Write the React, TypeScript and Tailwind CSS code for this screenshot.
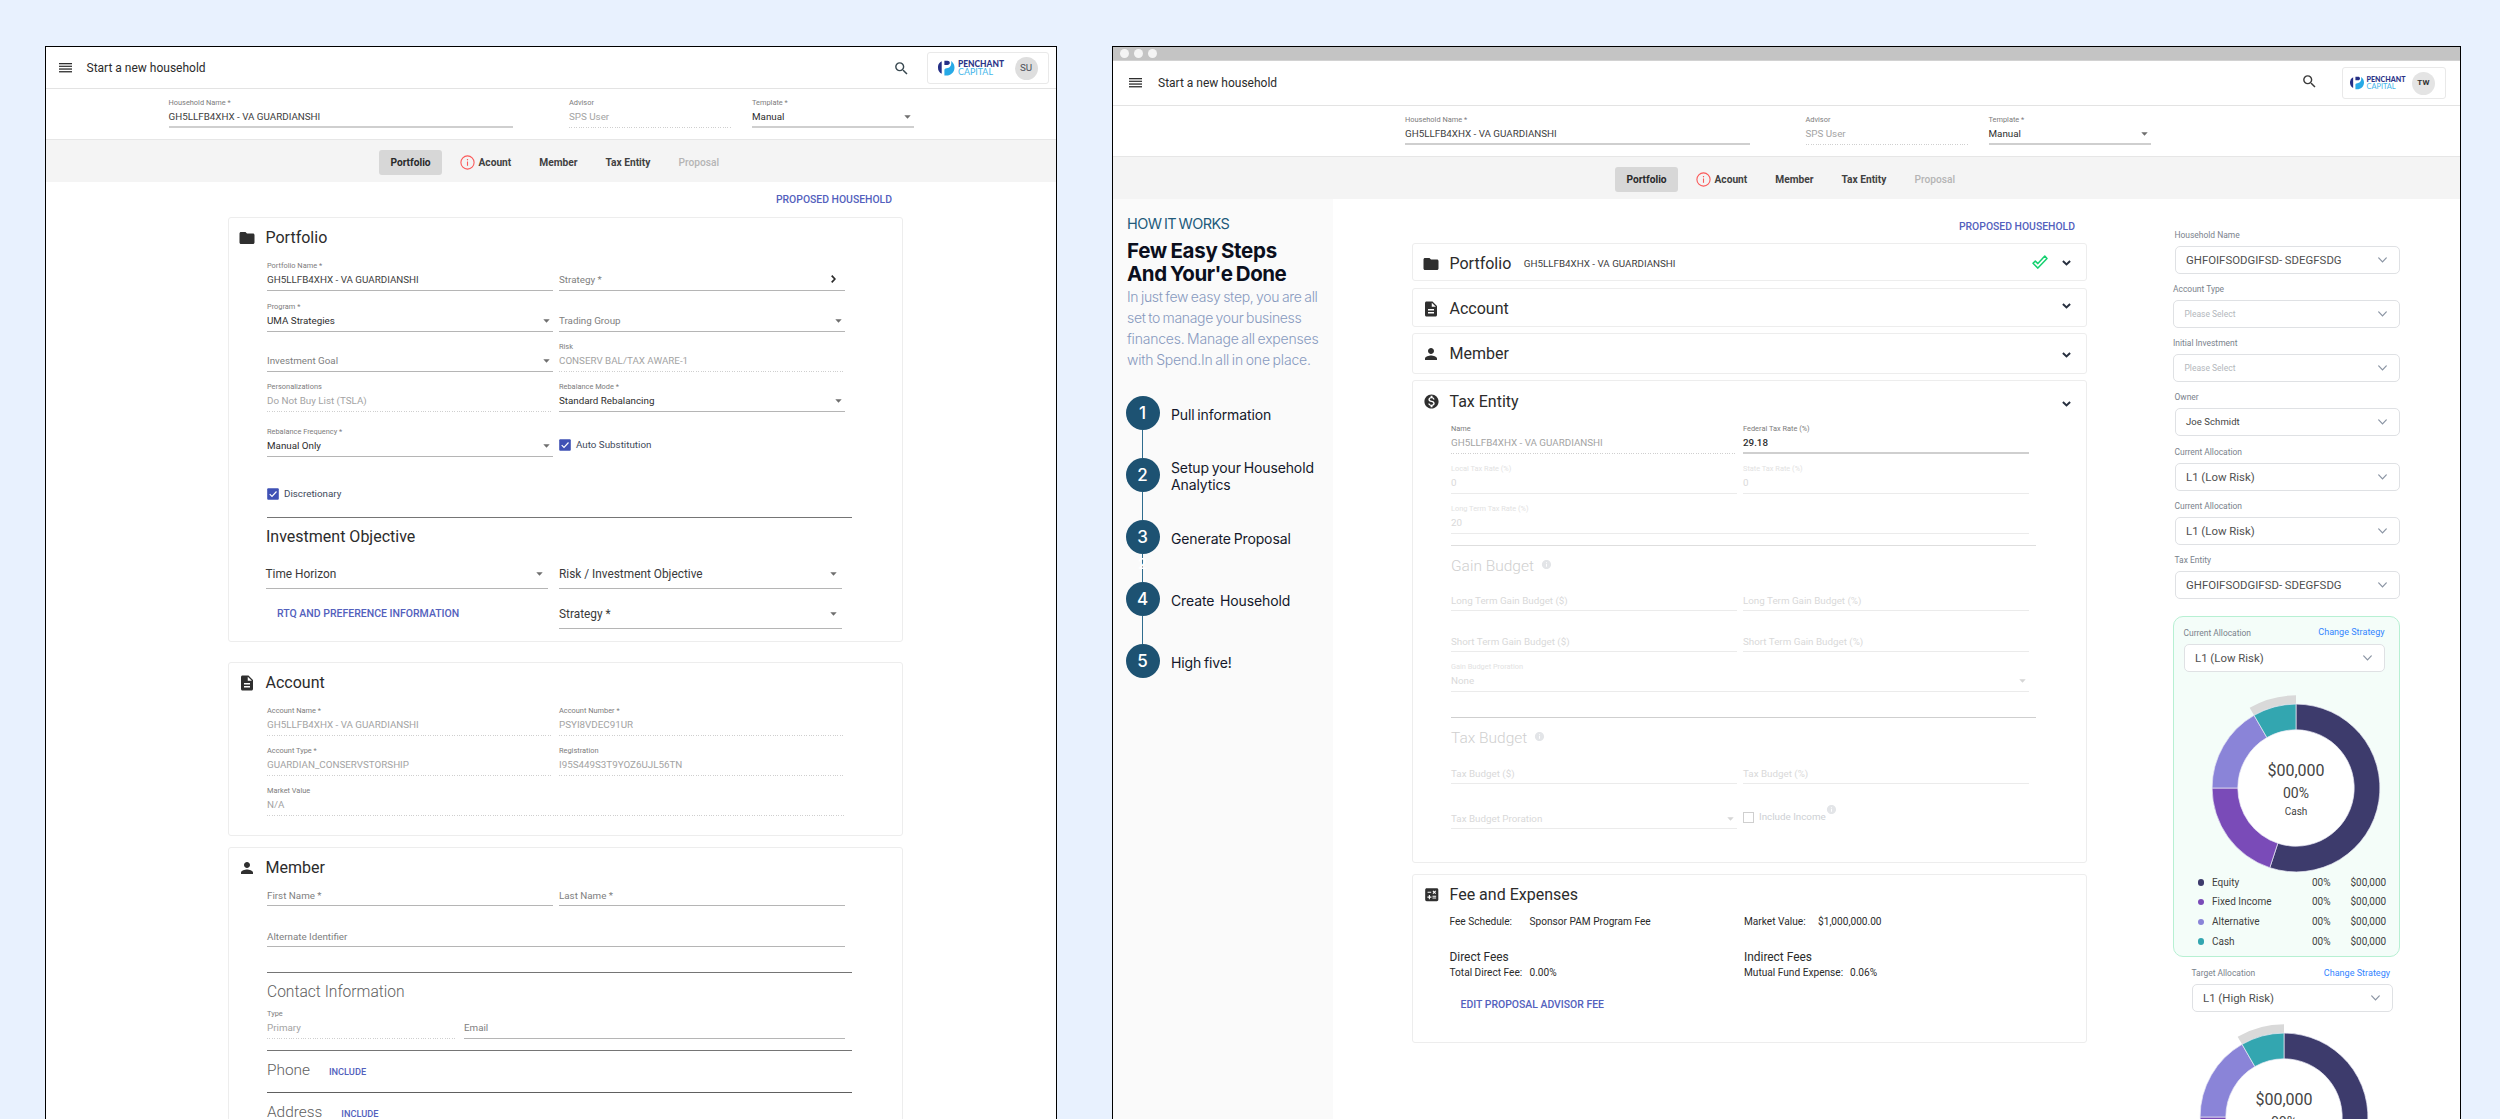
import React from "react";
import { clsx } from "clsx";
import {
  MdCalculate,
  MdDescription,
  MdFolder,
  MdInfo,
  MdMonetizationOn,
  MdPerson,
  MdSearch,
} from "react-icons/md";

/* ---------- small drawings ---------- */

const MenuIcon = () => (
  <svg width="13" height="10" viewBox="0 0 13 10" className="text-[#2e2e2e]" fill="currentColor">
    <rect y="0" width="13" height="1.3" />
    <rect y="2.7" width="13" height="1.2" />
    <rect y="5.4" width="13" height="1.3" />
    <rect y="8.1" width="13" height="1.3" />
  </svg>
);

const Caret = ({ className }: { className?: string }) => (
  <svg width="7" height="4" viewBox="0 0 7 4" className={clsx("shrink-0", className ?? "text-[#6f6f6f]")} fill="currentColor">
    <path d="M0.3 0.2h6.4L3.5 3.8z" />
  </svg>
);

const BoldChevron = ({ className }: { className?: string }) => (
  <svg width="9" height="6" viewBox="0 0 9 6" className={clsx("shrink-0 text-[#27303f]", className)} fill="none" stroke="currentColor" strokeWidth="2">
    <path d="M0.9 1l3.6 3.4L8.1 1" />
  </svg>
);

const ThinChevron = () => (
  <svg width="9" height="6" viewBox="0 0 9 6" className="shrink-0 text-[#8a94a3]" fill="none" stroke="currentColor" strokeWidth="1.2" strokeLinecap="round">
    <path d="M0.7 0.9l3.8 3.9 3.8-3.9" />
  </svg>
);

const RightChevron = () => (
  <svg width="5" height="8" viewBox="0 0 5 8" className="mb-[2px] mr-[9px] text-[#2b2b2b]" fill="none" stroke="currentColor" strokeWidth="1.7">
    <path d="M0.7 0.6l3.2 3.4L0.7 7.4" />
  </svg>
);

const GreenCheck = ({ className }: { className?: string }) => (
  <svg width="16" height="14" viewBox="0 0 16 14" className={className} fill="none" stroke="#15d170" strokeWidth="1.5" strokeLinejoin="round">
    <path d="M1 8.3L3.3 6.1L5.9 8.6L12.8 1L15 3.4L5.9 13.1Z" />
  </svg>
);

const AlertIcon = () => (
  <svg width="15" height="15" viewBox="0 0 15 15" fill="none" stroke="#fb5a5a">
    <circle cx="7.5" cy="7.5" r="6.6" strokeWidth="1.1" />
    <path d="M7.5 6.5v4.3" strokeWidth="1.1" />
    <path d="M7.5 4v1.3" strokeWidth="1.2" />
  </svg>
);

const LogoMark = ({ small }: { small?: boolean }) => (
  <svg viewBox="0 0 49 46" className={clsx("shrink-0", small ? "h-[13.5px] w-[14px]" : "h-[15.5px] w-[16.5px]")}>
    <path d="M11 4Q-1 10 0 23Q0 35 11 41Z" fill="#252f86" />
    <path d="M19 2h9c4 0 7 2 7 6s-3 6.5-7 6.5h-9z" fill="#252f86" />
    <path d="M39 3C46 8 49 15 49 22C49 36 38 46 25 46H19V29C20 25 24 25 29 24C37 22 41 14 39 3Z" fill="#27a9e6" />
  </svg>
);

const CheckedBox = () => (
  <svg width="12" height="12" viewBox="0 0 12 12" className="shrink-0">
    <rect width="11.6" height="11.6" x="0.2" y="0.2" rx="1" fill="#3f51b5" />
    <path d="M2.7 6.2l2.3 2.3 4.5-5" fill="none" stroke="#fff" strokeWidth="1.15" />
  </svg>
);

/* ---------- header ---------- */

function Brand({ initials, small }: { initials: string; small?: boolean }) {
  return (
    <div className={clsx("flex h-8 items-center rounded-[3px] border border-[#e9e9e9]", small ? "w-[104px] pl-[7px]" : "w-[122px] pl-[10px]")}>
      <LogoMark small={small} />
      <div
        className={clsx(
          "flex flex-col font-[Lato]",
          small ? "ml-[2.5px] w-[39.5px] gap-[0.5px] text-[7.1px] leading-[7px]" : "ml-[3.5px] w-[47px] gap-[0.5px] text-[8.4px] leading-[8px]"
        )}
      >
        <span className="font-black text-[#2b3488]">PENCHANT</span>
        <span className={clsx("text-[#45b6ea]", small ? "text-[7.4px]" : "text-[8.9px]")}>CAPITAL</span>
      </div>
      <div
        className={clsx(
          "flex h-[23px] w-[23px] shrink-0 items-center justify-center rounded-full",
          small ? "ml-[6px] bg-[#e4e4e4] text-[8px] font-bold tracking-[0.3px] text-[#333]" : "ml-[9.5px] bg-[#dedede] text-[9.8px] text-[#4b5058]"
        )}
      >
        {initials}
      </div>
    </div>
  );
}

function HouseholdBar({ indent }: { indent: string }) {
  return (
    <div className={clsx("flex h-[51px] shrink-0 border-b border-[#e6e6e6] pt-2", indent)}>
      <Field className="w-[344.5px]" label="Household Name *" value="GH5LLFB4XHX - VA GUARDIANSHI" line="heavy" />
      <Field className="ml-[56px] w-[162px]" label="Advisor" value="SPS User" tone="muted" line="dots" />
      <Field className="ml-[21px] w-[162px]" label="Template *" value="Manual" line="heavy" tone="strong" caret />
    </div>
  );
}

function Tabs({ indent }: { indent: string }) {
  return (
    <div className={clsx("flex h-[42px] shrink-0 items-start bg-[#f4f4f4] pt-[10px] text-[10.2px] font-bold text-[#414141]", indent)}>
      <div className="flex h-[25px] w-[63px] items-center justify-center rounded-[3px] bg-[#d7d7d7] text-[#2a2a2a]">Portfolio</div>
      <div className="ml-[17.5px] flex h-[25px] items-center">
        <AlertIcon />
        <span className="ml-[4px]">Acount</span>
        <span className="ml-[28px]">Member</span>
        <span className="ml-[28px]">Tax Entity</span>
        <span className="ml-[28px] font-medium text-[#b4b4b4]">Proposal</span>
      </div>
    </div>
  );
}

/* ---------- form pieces ---------- */

type Tone = "normal" | "strong" | "muted" | "hint" | "faded";
type Line = "solid" | "heavy" | "dots" | "faded";

const toneClass: Record<Tone, string> = {
  normal: "text-[#3d3d3d]",
  strong: "text-[#2e2e2e]",
  muted: "text-[#a3a3a3]",
  hint: "text-[#808080]",
  faded: "text-[#d9d9d9]",
};

function Underline({ line }: { line: Line }) {
  if (line === "dots")
    return (
      <div className="h-px w-full bg-[repeating-linear-gradient(90deg,#cfcfcf_0_1px,transparent_1px_2.4px)]" />
    );
  if (line === "heavy") return <div className="-mt-px h-[2px] w-full shrink-0 bg-[#cfcfcf]" />;
  if (line === "faded") return <div className="h-px w-full bg-[#ebebeb]" />;
  return <div className="h-px w-full bg-[#b5b5b5]" />;
}

interface FieldProps {
  label?: string;
  value: string;
  tone?: Tone;
  line?: Line;
  caret?: boolean;
  chevron?: boolean;
  bare?: boolean;
  bold?: boolean;
  labelClass?: string;
  className?: string;
}

/* A material style text field. `bare` drops the floating label. */
function Field({ label, value, tone = "normal", line = "solid", caret, chevron, bare, bold, labelClass, className }: FieldProps) {
  return (
    <div className={clsx("flex flex-col whitespace-nowrap", bare ? "h-[18px]" : "h-[31px]", className)}>
      {!bare && (
        <div className={clsx("h-3 text-[7.4px] leading-3", labelClass ?? "text-[#7c7c7c]")}>{label}</div>
      )}
      <div className={clsx("flex h-4 items-center justify-between text-[9.8px] leading-4", toneClass[tone], bold && "font-medium")}>
        <span>{value}</span>
        {caret && <Caret className={clsx("mr-[3px]", line === "faded" ? "text-[#d5d5d5]" : "text-[#6f6f6f]")} />}
        {chevron && <RightChevron />}
      </div>
      <div className={bare ? "h-px" : "h-[2px]"} />
      <Underline line={line} />
    </div>
  );
}

/* Taller select row that the objective block uses. */
function BigSelect({ value, className }: { value: string; className?: string }) {
  return (
    <div className={clsx("flex h-[23px] flex-col", className)}>
      <div className="flex h-4 items-center justify-between text-[11.85px] leading-4 text-[#3a3a3a]">
        <span>{value}</span>
        <Caret className="mr-[5px] text-[#6f6f6f]" />
      </div>
      <div className="mt-[6px] h-px bg-[#b5b5b5]" />
    </div>
  );
}

const Row = ({ className, children }: { className?: string; children: React.ReactNode }) => (
  <div className={clsx("flex gap-[6.5px]", className)}>{children}</div>
);

const Rule = ({ className }: { className: string }) => <div className={clsx("h-px w-[585px]", className)} />;

function CardTitle({ icon, title, className, children }: { icon: React.ReactNode; title: string; className?: string; children?: React.ReactNode }) {
  return (
    <div className={clsx("flex items-center", className ?? "h-10")}>
      <div className="flex w-[36.5px] justify-center text-[#2f2f2f]">{icon}</div>
      <h2 className="text-[16px] leading-5 text-[#2c2c2c]">{title}</h2>
      {children}
    </div>
  );
}

const Card = ({ className, children }: { className: string; children: React.ReactNode }) => (
  <section className={clsx("w-[675px] shrink-0 rounded-[3px] border border-[#ededed] bg-white", className)}>{children}</section>
);

const half = "w-[285.5px]";
const full = "w-[577.5px]";
const link = "font-medium text-[#5361bd]";

/* ---------- left window ---------- */

function LegacyWindow() {
  return (
    <div className="flex h-[1200px] w-[1012px] shrink-0 flex-col border border-black bg-white">
      <header className="flex h-[42px] shrink-0 items-center border-b border-[#e3e3e3] pl-[13px] pr-[7px] pt-px">
        <MenuIcon />
        <h1 className="ml-[14.5px] flex-1 text-[12px] leading-4 text-[#2b2b2b]">Start a new household</h1>
        <MdSearch size={17} className="mr-[17px] text-[#37474f]" />
        <Brand initials="SU" />
      </header>
      <HouseholdBar indent="pl-[122.5px]" />
      <Tabs indent="pl-[333px]" />

      <div className="flex w-[857px] shrink-0 flex-col pl-[182px]">
        <div className={clsx("w-[664px] pt-2 text-right text-[10.4px] leading-5", link)}>PROPOSED HOUSEHOLD</div>

        <Card className="mt-[7px] h-[425px]">
          <CardTitle icon={<MdFolder size={18} />} title="Portfolio" />
          <div className="flex flex-col pl-[38px]">
            <Row className="mt-[2px]">
              <Field className={half} label="Portfolio Name *" value="GH5LLFB4XHX - VA GUARDIANSHI" />
              <Field className={half} value="Strategy *" tone="hint" chevron />
            </Row>
            <Row className="mt-[10px]">
              <Field className={half} label="Program *" value="UMA Strategies" tone="strong" caret />
              <Field className={half} value="Trading Group" tone="hint" caret />
            </Row>
            <Row className="mt-[9px]">
              <Field className={half} value="Investment Goal" tone="hint" caret />
              <Field className={half} label="Risk" value="CONSERV BAL/TAX AWARE-1" tone="muted" line="dots" />
            </Row>
            <Row className="mt-[9px]">
              <Field className={half} label="Personalizations" value="Do Not Buy List (TSLA)" tone="muted" line="dots" />
              <Field className={half} label="Rebalance Mode *" value="Standard Rebalancing" tone="strong" caret />
            </Row>
            <Row className="mt-[14px]">
              <Field className={half} label="Rebalance Frequency *" value="Manual Only" tone="strong" caret />
              <div className="mt-[13px] flex h-3 items-center text-[9.8px] leading-3 text-[#414a5c]">
                <CheckedBox />
                <span className="ml-[5px]">Auto Substitution</span>
              </div>
            </Row>
            <div className="mt-[31px] flex h-3 items-center text-[9.8px] leading-3 text-[#414a5c]">
              <CheckedBox />
              <span className="ml-[5px]">Discretionary</span>
            </div>
            <Rule className="mt-[17px] bg-[#757575]" />
            <h3 className="-ml-px mt-[9px] text-[16px] leading-5 text-[#2c2c2c]">Investment Objective</h3>
            <div className="-ml-[1.5px] mt-[19px] flex gap-[11px]">
              <BigSelect className="w-[282.5px]" value="Time Horizon" />
              <BigSelect className="w-[283px]" value="Risk / Investment Objective" />
            </div>
            <div className="-ml-[1.5px] mt-[17px] flex gap-[11px]">
              <div className={clsx("w-[282.5px] pl-[11.5px] text-[10.5px] leading-4", link)}>RTQ AND PREFERENCE INFORMATION</div>
              <BigSelect className="w-[283px]" value="Strategy *" />
            </div>
          </div>
        </Card>

        <Card className="mt-5 h-[174px]">
          <CardTitle className="h-[39px]" icon={<MdDescription size={18} />} title="Account" />
          <div className="flex flex-col gap-[9px] pl-[38px] pt-[3px]">
            <Row>
              <Field className={half} label="Account Name *" value="GH5LLFB4XHX - VA GUARDIANSHI" tone="muted" line="dots" />
              <Field className={half} label="Account Number *" value="PSYI8VDEC91UR" tone="muted" line="dots" />
            </Row>
            <Row>
              <Field className={half} label="Account Type *" value="GUARDIAN_CONSERVSTORSHIP" tone="muted" line="dots" />
              <Field className={half} label="Registration" value="I95S449S3T9YOZ6UJL56TN" tone="muted" line="dots" />
            </Row>
            <Field className={full} label="Market Value" value="N/A" tone="muted" line="dots" />
          </div>
        </Card>

        <Card className="mt-[11px] h-[300px]">
          <CardTitle className="h-[39px]" icon={<MdPerson size={18} />} title="Member" />
          <div className="flex flex-col pl-[38px]">
            <Row className="mt-px">
              <Field bare className={half} value="First Name *" tone="hint" />
              <Field bare className={half} value="Last Name *" tone="hint" />
            </Row>
            <Field bare className={clsx(full, "mt-[23px]")} value="Alternate Identifier" tone="hint" />
            <Rule className="mt-[25px] bg-[#757575]" />
            <h3 className="mt-[9px] text-[15.6px] font-light leading-5 text-[#5e5e5e]">Contact Information</h3>
            <div className="mt-[6px] flex gap-[8px]">
              <Field className="w-[189px]" label="Type" value="Primary" tone="muted" line="dots" />
              <Field className="w-[380.5px]" value="Email" tone="hint" />
            </div>
            <Rule className="mt-[11px] bg-[#757575]" />
            <div className="mt-[9px] flex items-center text-[15.4px] font-light leading-5 text-[#5e5e5e]">
              Phone
              <span className={clsx("ml-[19px] pt-[3px] text-[9.2px] leading-4", link)}>INCLUDE</span>
            </div>
            <Rule className="mt-[12px] bg-[#606060]" />
            <div className="mt-[9px] flex items-center text-[15.4px] font-light leading-5 text-[#5e5e5e]">
              Address
              <span className={clsx("ml-[19px] pt-[3px] text-[9.2px] leading-4", link)}>INCLUDE</span>
            </div>
          </div>
        </Card>
      </div>
    </div>
  );
}

/* ---------- right window ---------- */

const steps = ["Pull information", "Setup your Household Analytics", "Generate Proposal", "Create  Household", "High five!"];

function HowItWorks() {
  return (
    <aside className="w-[220px] shrink-0 bg-[#fafafa] pt-[14.5px] font-[Inter]">
      <div className="flex flex-col whitespace-nowrap pl-[14px] [word-spacing:-1px]">
        <p className="text-[14.5px] leading-5 tracking-[-0.57px] text-[#225a7b]">HOW IT WORKS</p>
        <h2 className="mt-[5px] flex flex-col text-[20.5px] font-bold leading-[23.3px] text-[#0b0f1d]">
          <span className="tracking-[-0.3px]">Few Easy Steps</span>
          <span className="tracking-[-0.46px]">And Your'e Done</span>
        </h2>
        <p className="mt-px flex flex-col text-[14px] font-light leading-[21.1px] text-[#8799be]">
          <span className="tracking-[-0.3px]">In just few easy step, you are all</span>
          <span className="tracking-[-0.32px]">set to manage your business</span>
          <span className="tracking-[-0.22px]">finances. Manage all expenses</span>
          <span className="tracking-[-0.18px]">with Spend.In all in one place.</span>
        </p>
      </div>
      <ol className="mt-[26px] flex flex-col pl-[12.5px]">
        {steps.map((step, i) => (
          <li key={step} className="flex flex-col">
            <div className="flex h-[34px] items-center">
              <div className="flex h-[34px] w-[34px] shrink-0 items-center justify-center rounded-full bg-[#1d5272] pt-px text-[17px] font-medium text-white">
                {i + 1}
              </div>
              <span className="ml-[11.5px] w-[152px] whitespace-pre-wrap pt-[2px] text-[14px] leading-[17px] tracking-[-0.12px] text-[#14182a] [word-spacing:-1px]">
                {step}
              </span>
            </div>
            {i < 4 && (
              <div className="flex h-7 w-[34px] justify-center">
                <div className="relative h-full w-[1.5px] bg-[#2f6c8e]">
                  {i === 2 && (
                    <span className="absolute -left-[4px] top-[2px] text-[15px] font-semibold leading-[15px] text-white">2</span>
                  )}
                </div>
              </div>
            )}
          </li>
        ))}
      </ol>
    </aside>
  );
}

const fadedLabel = "text-[#e2e2e2]";

const BudgetTitle = ({ title }: { title: string }) => (
  <h3 className="mt-[10px] flex items-center text-[15.5px] font-light leading-5 text-[#cfcfcf]">
    {title}
    <MdInfo size={11} className="mb-[3px] ml-[7px] text-[#e3e5e8]" />
  </h3>
);

function MainColumn() {
  return (
    <main className="ml-[79px] flex w-[675px] shrink-0 flex-col pt-[17.5px]">
      <div className={clsx("pr-3 text-right text-[10.4px] leading-5", link)}>PROPOSED HOUSEHOLD</div>

      <Card className="mt-[6.5px] h-[38px]">
        <CardTitle className="h-10" icon={<MdFolder size={18} />} title="Portfolio">
          <span className="ml-[12.5px] flex-1 text-[9.8px] text-[#3d3d3d]">GH5LLFB4XHX - VA GUARDIANSHI</span>
          <GreenCheck className="mb-[5px] mr-[14.5px]" />
          <BoldChevron className="mb-[2px] mr-[15px]" />
        </CardTitle>
      </Card>
      <Card className="mt-[7px] h-[39px]">
        <CardTitle className="h-[39px]" icon={<MdDescription size={18} />} title="Account">
          <BoldChevron className="mb-[5px] ml-auto mr-[15px]" />
        </CardTitle>
      </Card>
      <Card className="mt-[6px] h-[41px]">
        <CardTitle className="h-10" icon={<MdPerson size={18} />} title="Member">
          <BoldChevron className="ml-auto mr-[15px] mt-[1px]" />
        </CardTitle>
      </Card>

      <Card className="mt-[6px] h-[483px]">
        <CardTitle className="h-[41px]" icon={<MdMonetizationOn size={17} />} title="Tax Entity">
          <BoldChevron className="ml-auto mr-[15px] mt-[5px]" />
        </CardTitle>
        <div className="flex flex-col pl-[38px]">
          <Row className="mt-px">
            <Field className={half} label="Name" value="GH5LLFB4XHX - VA GUARDIANSHI" tone="muted" line="dots" />
            <Field className={half} bold label="Federal Tax Rate (%)" value="29.18" tone="strong" line="heavy" />
          </Row>
          <Row className="mt-[9px]">
            <Field className={half} label="Local Tax Rate (%)" value="0" tone="faded" line="faded" labelClass={fadedLabel} />
            <Field className={half} label="State Tax Rate (%)" value="0" tone="faded" line="faded" labelClass={fadedLabel} />
          </Row>
          <Field className={clsx(full, "mt-[9px]")} label="Long Term Tax Rate (%)" value="20" tone="faded" line="faded" labelClass={fadedLabel} />
          <Rule className="mt-[11px] bg-[#dedede]" />
          <BudgetTitle title="Gain Budget" />
          <Row className="mt-[17px]">
            <Field bare className={half} value="Long Term Gain Budget ($)" tone="faded" line="faded" />
            <Field bare className={half} value="Long Term Gain Budget (%)" tone="faded" line="faded" />
          </Row>
          <Row className="mt-[23px]">
            <Field bare className={half} value="Short Term Gain Budget ($)" tone="faded" line="faded" />
            <Field bare className={half} value="Short Term Gain Budget (%)" tone="faded" line="faded" />
          </Row>
          <Field className={clsx(full, "mt-[9px]")} label="Gain Budget Proration" value="None" tone="faded" line="faded" labelClass={fadedLabel} caret />
          <Rule className="mt-[25px] bg-[#cfcfcf]" />
          <BudgetTitle title="Tax Budget" />
          <Row className="mt-[18px]">
            <Field bare className={half} value="Tax Budget ($)" tone="faded" line="faded" />
            <Field bare className={half} value="Tax Budget (%)" tone="faded" line="faded" />
          </Row>
          <Row className="mt-[27px]">
            <Field bare className={half} value="Tax Budget Proration" tone="faded" line="faded" caret />
            <div className="flex h-3 items-center text-[9.8px] leading-3 text-[#cdd0d4]">
              <span className="h-[11px] w-[11px] border border-[#cfcfcf]" />
              <span className="ml-[5px]">Include Income</span>
              <MdInfo size={11} className="mb-[15px] text-[#e3e5e8]" />
            </div>
          </Row>
        </div>
      </Card>

      <Card className="mt-[11px] h-[169px]">
        <CardTitle className="h-[39px]" icon={<MdCalculate size={17.5} />} title="Fee and Expenses" />
        <div className="flex pl-[36.5px] text-[10.15px] leading-4 text-[#2b2b2b]">
          <div className="w-[294.5px]">
            <p className="flex">
              <span className="w-[80px]">Fee Schedule:</span>
              <span>Sponsor PAM Program Fee</span>
            </p>
            <p className="mt-[20px] text-[11.9px] leading-[15px]">Direct Fees</p>
            <p className="flex">
              <span className="w-[80px]">Total Direct Fee:</span>
              <span>0.00%</span>
            </p>
            <p className={clsx("mt-[15.5px] pl-[11px] text-[10.45px]", link)}>EDIT PROPOSAL ADVISOR FEE</p>
          </div>
          <div>
            <p className="flex">
              <span className="w-[74px]">Market Value:</span>
              <span>$1,000,000.00</span>
            </p>
            <p className="mt-[20px] text-[11.9px] leading-[15px]">Indirect Fees</p>
            <p className="flex">
              <span className="w-[106px]">Mutual Fund Expense:</span>
              <span>0.06%</span>
            </p>
          </div>
        </div>
      </Card>
    </main>
  );
}

type SelectSize = "large" | "medium" | "placeholder";

function SelectBox({ value, size = "large" }: { value: string; size?: SelectSize }) {
  return (
    <div className="flex h-7 items-center justify-between rounded-[5px] border border-[#dfe1e4] bg-white pl-[10.5px] pr-[12px]">
      <span
        className={clsx(
          "leading-4",
          size === "large" && "text-[11.4px] text-[#505050]",
          size === "medium" && "text-[9.5px] tracking-[0.07px] text-[#444]",
          size === "placeholder" && "text-[8.5px] text-[#b3b7bc]"
        )}
      >
        {value}
      </span>
      <ThinChevron />
    </div>
  );
}

const sideFields: { label: string; value: string; size?: SelectSize; wide?: boolean }[] = [
  { label: "Household Name", value: "GHFOIFSODGIFSD- SDEGFSDG" },
  { label: "Account Type", value: "Please Select", size: "placeholder", wide: true },
  { label: "Initial Investment", value: "Please Select", size: "placeholder", wide: true },
  { label: "Owner", value: "Joe Schmidt", size: "medium" },
  { label: "Current Allocation", value: "L1 (Low Risk)" },
  { label: "Current Allocation", value: "L1 (Low Risk)" },
  { label: "Tax Entity", value: "GHFOIFSODGIFSD- SDEGFSDG" },
];

const CENTER = 94;
const point = (r: number, deg: number) => {
  const a = ((deg - 90) * Math.PI) / 180;
  return `${(CENTER + r * Math.cos(a)).toFixed(2)} ${(CENTER + r * Math.sin(a)).toFixed(2)}`;
};
const ring = (inner: number, outer: number, from: number, to: number) => {
  const large = to - from > 180 ? 1 : 0;
  return `M${point(outer, from)}A${outer} ${outer} 0 ${large} 1 ${point(outer, to)}L${point(inner, to)}A${inner} ${inner} 0 ${large} 0 ${point(inner, from)}Z`;
};

const segments = [
  { name: "Equity", from: 0, to: 198.2, fill: "#3d3b6c", dot: "bg-[#3d3b6c]" },
  { name: "Fixed Income", from: 198.2, to: 270, fill: "#7a4bb8", dot: "bg-[#7a4bb8]" },
  { name: "Alternative", from: 270, to: 330, fill: "#8a84d8", dot: "bg-[#8a84d8]" },
  { name: "Cash", from: 330, to: 360, fill: "#33a6b0", dot: "bg-[#33a6b0]" },
];

function Donut({ className }: { className?: string }) {
  return (
    <div className={clsx("relative h-[179px] w-[188px] text-[#444]", className)}>
      <svg width="188" height="179" viewBox="0 0 188 179">
        <circle cx={CENTER} cy={CENTER} r="60" fill="#fff" />
        <path d={ring(83, 92.7, 330, 360)} fill="#d9d9d9" />
        {segments.map((s) => (
          <path key={s.name} d={ring(58.2, 83.9, s.from, s.to)} fill={s.fill} stroke="#e9e9f5" strokeWidth="0.7" />
        ))}
      </svg>
      <div className="absolute inset-0 flex flex-col items-center pt-[68px]">
        <span className="text-[16px] leading-[18px]">$00,000</span>
        <span className="mt-1 text-[14px] leading-[18px]">00%</span>
        <span className="mt-[3px] text-[10px] leading-[14px]">Cash</span>
      </div>
    </div>
  );
}

function AllocationColumn() {
  return (
    <div className="ml-[86px] flex w-[227px] shrink-0 flex-col pt-[30px]">
      <div className="flex flex-col gap-[9.15px]">
        {sideFields.map((f, i) => (
          <div key={i} className={clsx("flex flex-col gap-[5px]", !f.wide && "ml-[1.5px]")}>
            <span className="text-[8.45px] leading-3 text-[#7a828c]">{f.label}</span>
            <SelectBox value={f.value} size={f.size} />
          </div>
        ))}
      </div>

      <section className="mt-[17px] flex h-[341px] shrink-0 flex-col rounded-[10px] border border-[#b7f0d3] bg-[#f4fdf9] pt-[9px]">
        <div className="ml-[9.5px] w-[201px]">
          <div className="flex items-start justify-between text-[8.45px] leading-3">
            <span className="pt-[1.5px] text-[#7a828c]">Current Allocation</span>
            <span className="text-[9.05px] text-[#3385ff]">Change Strategy</span>
          </div>
          <div className="mt-[5px]">
            <SelectBox value="L1 (Low Risk)" />
          </div>
        </div>
        <Donut className="ml-[28px] mt-[21.5px] shrink-0" />
        <div className="flex flex-col pl-[23.5px] text-[10px] leading-[19.6px] text-[#3f3f3f]">
          {segments.map((s) => (
            <div key={s.name} className="flex items-center">
              <span className={clsx("h-[6.5px] w-[6.5px] rounded-full", s.dot)} />
              <span className="ml-[8px] w-[100px]">{s.name}</span>
              <span className="w-[38.5px]">00%</span>
              <span>$00,000</span>
            </div>
          ))}
        </div>
      </section>

      <section className="ml-[18.5px] mt-[10.5px] w-[201px] shrink-0">
        <div className="flex items-start justify-between text-[8.45px] leading-3">
          <span className="text-[#7a828c]">Target Allocation</span>
          <span className="pr-[2.5px] text-[9.05px] text-[#3385ff]">Change Strategy</span>
        </div>
        <div className="mt-[5px]">
          <SelectBox value="L1 (High Risk)" />
        </div>
        <Donut className="-ml-[1.5px] mt-[10.5px]" />
      </section>
    </div>
  );
}

function ProposalWindow() {
  return (
    <div className="ml-[55px] flex h-[1200px] w-[1349px] shrink-0 flex-col border border-black bg-white">
      <div className="flex h-[14px] shrink-0 items-center gap-[5px] border-b border-[#d2d2d2] bg-[#c4c4c4] pl-[7px]">
        <span className="h-[9px] w-[9px] rounded-full bg-[#f4f4f4]" />
        <span className="h-[9px] w-[9px] rounded-full bg-[#f4f4f4]" />
        <span className="h-[9px] w-[9px] rounded-full bg-[#f4f4f4]" />
      </div>
      <header className="flex h-[45px] shrink-0 items-center border-b border-[#e3e3e3] pl-[16px] pr-[14px]">
        <MenuIcon />
        <h1 className="ml-[16px] flex-1 text-[12px] leading-4 text-[#2b2b2b]">Start a new household</h1>
        <MdSearch size={17} className="mb-[3px] mr-[24px] text-[#3a3a3a]" />
        <Brand initials="TW" small />
      </header>
      <HouseholdBar indent="pl-[292px]" />
      <Tabs indent="pl-[502px]" />
      <div className="flex flex-1">
        <HowItWorks />
        <MainColumn />
        <AllocationColumn />
      </div>
    </div>
  );
}

export default function App() {
  return (
    <div className="flex h-[1119px] w-[2500px] items-start overflow-hidden bg-[#e8f1fe] pl-[45px] pt-[46px] font-[Roboto]">
      <LegacyWindow />
      <ProposalWindow />
    </div>
  );
}
